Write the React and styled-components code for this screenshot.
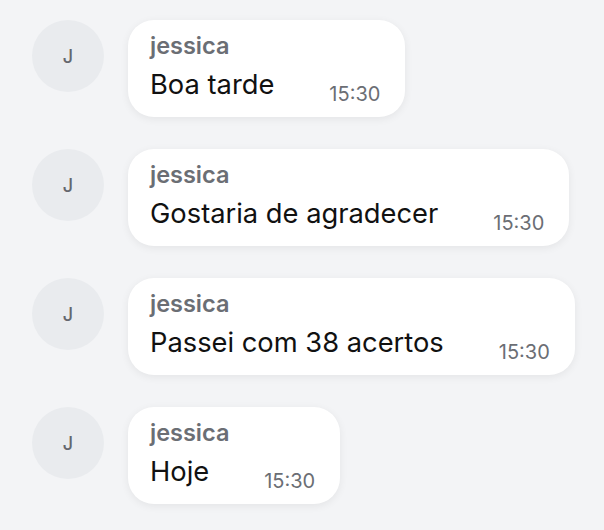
import React from "react";
import styled, { createGlobalStyle } from "styled-components";

const messages = [
	{ id: 1, author: "jessica", text: "Boa tarde", time: "15:30" },
	{ id: 2, author: "jessica", text: "Gostaria de agradecer", time: "15:30" },
	{ id: 3, author: "jessica", text: "Passei com 38 acertos", time: "15:30" },
	{ id: 4, author: "jessica", text: "Hoje", time: "15:30" },
];

// ******************
// component
// ******************
const App = () => {
	return (
		<>
			<GlobalStyle />
			<Feed>
				{messages.map((msg) => (
					<Row key={msg.id}>
						<Avatar>{msg.author[0].toUpperCase()}</Avatar>
						<Bubble>
							<Author>{msg.author}</Author>
							<Body>
								<Text>{msg.text}</Text>
								<Time>{msg.time}</Time>
							</Body>
						</Bubble>
					</Row>
				))}
			</Feed>
		</>
	);
};

export default App;

// ******************
// styles
// ******************
const GlobalStyle = createGlobalStyle`
	html, body {
		margin: 0;
		padding: 0;
		background: #f3f4f6;
	}
	body {
		font-family: Inter, "Noto Sans", sans-serif;
		-webkit-font-smoothing: antialiased;
	}
`;
const Feed = styled.div`
	display: flex;
	flex-direction: column;
	gap: 32px;
	padding: 20px 0 0 32px;
	min-height: 530px;
	box-sizing: border-box;
`;
const Row = styled.div`
	display: flex;
	align-items: flex-start;
	gap: 24px;
`;
const Avatar = styled.div`
	width: 72px;
	height: 72px;
	flex-shrink: 0;
	border-radius: 50%;
	background: #e9ebee;
	color: #64676d;
	font-size: 18px;
	font-weight: 500;
	display: flex;
	align-items: center;
	justify-content: center;
`;
const Bubble = styled.div`
	background: #ffffff;
	border-radius: 26px;
	padding: 12px 25px 12px 22px;
	box-shadow: 0 2px 9px rgba(0, 0, 0, 0.065);
	display: flex;
	flex-direction: column;
`;
const Author = styled.div`
	font-size: 23.5px;
	font-weight: 600;
	color: #6b6e74;
	line-height: 28px;
`;
const Body = styled.div`
	display: flex;
	align-items: flex-end;
	gap: 55px;
	margin-top: 5px;
`;
const Text = styled.div`
	font-size: 27.3px;
	color: #111111;
	line-height: 40px;
`;
const Time = styled.div`
	font-size: 20px;
	color: #6b6e74;
	line-height: 26px;
	margin-bottom: -2px;
`;
